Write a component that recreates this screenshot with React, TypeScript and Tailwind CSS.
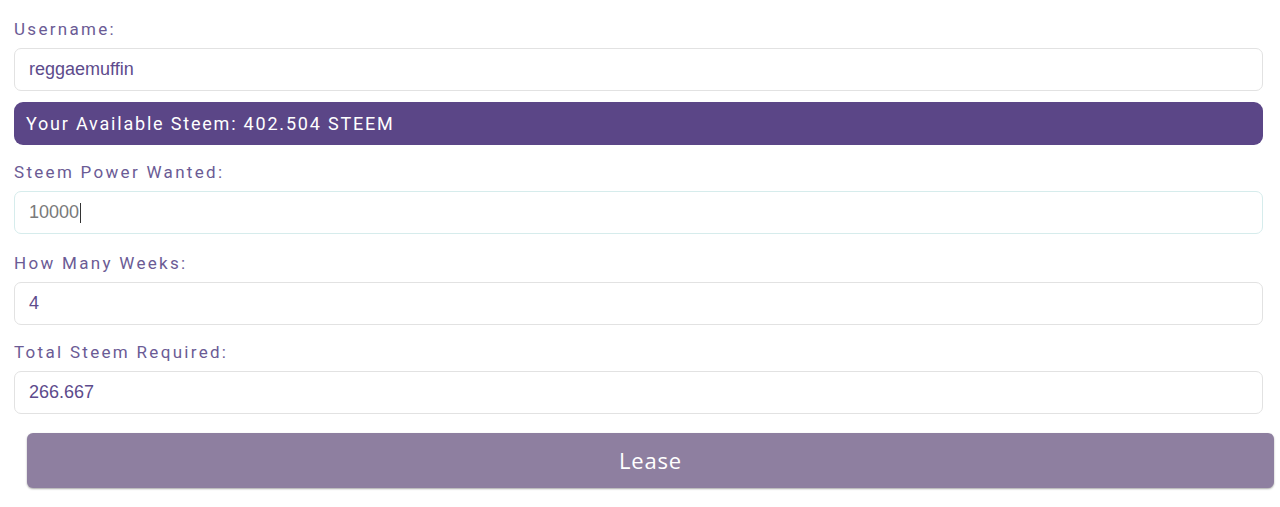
import React from 'react';

const Label: React.FC<{ text: string }> = ({ text }) => (
  <label className="block text-[17px] leading-[22px] tracking-[2.3px] text-[#6b5b95] font-['Roboto',sans-serif] pb-[8px]">
    {text}
  </label>
);

const Field: React.FC<{ value: string; focused?: boolean }> = ({ value, focused }) => (
  <div
    className={
      'h-[43px] w-full rounded-[7px] border bg-white flex items-center px-[14px] ' +
      (focused ? 'border-[#d6ecec]' : 'border-[#e2e2e2]')
    }
  >
    <span
      className={
        "text-[18px] font-['Liberation_Sans',Arial,sans-serif] " +
        (focused ? 'text-[#7a7a7a]' : 'text-[#5d4b8c]')
      }
    >
      {value}
    </span>
    {focused && <span className="w-px h-[20px] bg-[#333] ml-px" />}
  </div>
);

export default function App() {
  return (
    <div className="w-[1280px] h-[507px] bg-white pl-[14px] pr-[17px] pt-[18px]">
      <Label text="Username:" />
      <Field value="reggaemuffin" />
      <div className="mt-[11px] h-[43px] rounded-[9px] bg-[#5b4687] flex items-center px-[12px]">
        <span className="text-white text-[18px] tracking-[1.8px] font-['Roboto',sans-serif]">
          Your Available Steem: 402.504 STEEM
        </span>
      </div>
      <div className="mt-[16px]">
        <Label text="Steem Power Wanted:" />
        <Field value="10000" focused />
      </div>
      <div className="mt-[18px]">
        <Label text="How Many Weeks:" />
        <Field value="4" />
      </div>
      <div className="mt-[16px]">
        <Label text="Total Steem Required:" />
        <Field value="266.667" />
      </div>
      <div className="mt-[19px] pl-[13px] -mr-[11px]">
        <button className="w-full h-[55px] rounded-[6px] bg-[#8e7fa0] text-white text-[22px] tracking-[0.8px] font-['Open_Sans',sans-serif] shadow-[0_1px_2px_rgba(0,0,0,0.35)]">
          Lease
        </button>
      </div>
    </div>
  );
}
